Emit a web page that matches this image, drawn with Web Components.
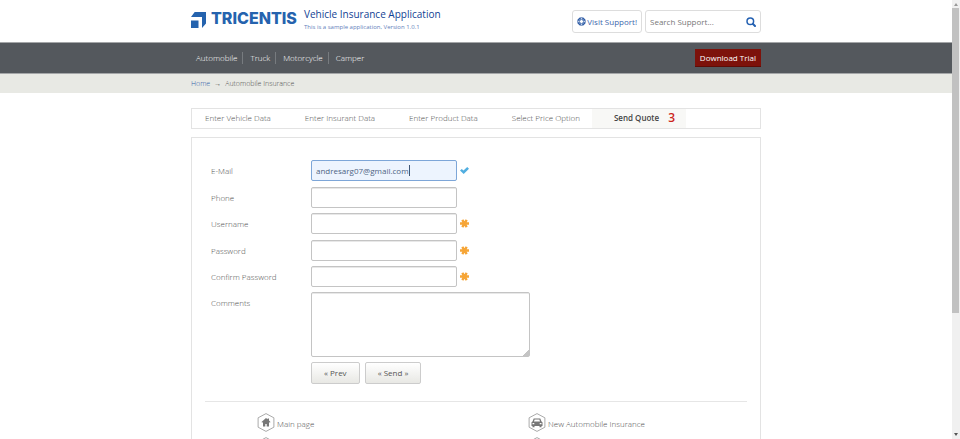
<!DOCTYPE html>
<html lang="en">
<head>
<meta charset="utf-8">
<title>Vehicle Insurance Application</title>
<style>
body { margin: 0; background: #fff; color: #505050; font: 300 8px/12px "Open Sans", "Noto Sans", sans-serif; }
</style>
</head>
<body>
<insurance-page></insurance-page>
<script>
const shared = `*{box-sizing:border-box}a{color:inherit;text-decoration:none}button,input,textarea{font:inherit;color:inherit}svg{display:block}`;
function define(name, css, html) {
  customElements.define(name, class extends HTMLElement {
    constructor() {
      super();
      const root = this.attachShadow({ mode: "open" });
      const content = typeof html === "function" ? html(this) : html;
      root.innerHTML = `<style>${shared}${css}</style>${content}`;
    }
  });
}

define("page-width", `
:host{display:block;width:100%;max-width:570px;margin:0 auto}`, `<slot></slot>`);

define("site-header", `
:host{display:block}
.row{display:flex;justify-content:space-between;align-items:flex-start;height:42px;padding-top:7px}
.brand{display:flex;color:#2563ae}
.mark{margin-top:5px;margin-right:5px}
.word{font:800 16px/22px Inter,"Open Sans",sans-serif;width:93px}
h1{margin:0;font-size:10px;line-height:15px;font-weight:500;color:#123f94;white-space:nowrap}
p{margin:0;font-size:6px;line-height:10px;font-weight:400;color:#5f80ba;white-space:nowrap}
.tools{display:flex;gap:3px;padding-top:3px;font-weight:400}
.support,.search{height:23px;border:1px solid #ddd;border-radius:3px;display:flex;align-items:center;background:#fff}
.support{color:#4068ad;padding:0 4px;gap:1px;white-space:nowrap}
.search{width:116px;padding:0 4px}
input{flex:1;min-width:0;border:0;padding:0;background:none;outline:0;height:20px}
input::placeholder{color:#777;opacity:1}
button{border:0;background:none;padding:0}`, `
<page-width><div class="row">
<div class="brand">
<svg class="mark" width="15" height="16" viewBox="0 0 15 16" aria-hidden="true"><path fill="#2563ae" d="M0 8.500h7.500V16H0zM3.700 0H15v11.500L11 16V5H0z"/></svg>
<span class="word">TRICENTIS</span>
<div><h1>Vehicle Insurance Application</h1><p>This is a sample application, Version 1.0.1</p></div>
</div>
<div class="tools">
<a class="support" href="#support"><svg width="9" height="9" viewBox="0 0 9 9" fill="none" stroke="#2d5ba5" aria-hidden="true"><circle cx="4.500" cy="4.500" r="3.700" stroke-width="1"/><circle cx="4.500" cy="4.500" r="2" stroke-width=".7"/><path d="M3 .5v2.500M6 .5v2.500M3 6v2.500M6 6v2.500M.5 3h2.500M.5 6h2.500M6 3h2.500M6 6h2.500"/></svg>Visit Support!</a>
<form class="search"><input type="search" aria-label="Search Support" placeholder="Search Support..."><button type="button" aria-label="Search"><svg width="10" height="10" viewBox="0 0 10 10" fill="none" stroke="#2461b2" aria-hidden="true"><circle cx="4.300" cy="4.300" r="3.300" stroke-width="1.500"/><path stroke-width="2" stroke-linecap="round" d="M7 7l2 2"/></svg></button></form>
</div></div></page-width>`);

define("main-nav", `
:host{display:block;background:#54585d;border:1px solid #a4a6a8;border-width:1px 0;color:#fff}
.row{display:flex;align-items:center;justify-content:space-between;height:30px}
nav{display:flex;padding-bottom:1px}
nav a{padding:0 5px 0 7px;border-right:1px solid #777b7f}
nav a:first-child{padding-left:5px}
nav a:last-child{border:0}
.trial{background:#7d120b;border-bottom:1px solid #5e0c07;padding:0 5px;height:18px;line-height:17px;font-weight:400;color:#fff}`, `
<page-width><div class="row"><nav><a href="#automobile">Automobile</a><a href="#truck">Truck</a><a href="#motorcycle">Motorcycle</a><a href="#camper">Camper</a></nav>
<a class="trial" href="#trial">Download Trial</a></div></page-width>`);

define("bread-crumbs", `
:host{display:block;background:#e8e9e4;font-size:7px;line-height:19px}
nav{display:flex;gap:4px}
a{color:#3460a8}`, `
<page-width><nav aria-label="Breadcrumb"><a href="#home">Home</a><span>→</span><span>Automobile Insurance</span></nav></page-width>`);

define("step-tabs", `
:host{display:flex;border:1px solid #e3e3e3;height:21px;line-height:18px;margin:15px 0 8px}
::slotted(step-tab:first-child){margin-left:-9px}`, `<slot></slot>`);

define("step-tab", `
:host{display:block;white-space:nowrap}
a{display:flex;padding:0 12px 0 22px;height:100%}
:host([count]) a{background:#f8f8f6;font-weight:600;color:#444;padding-right:11px}
b{font-size:12px;color:#cc241a;font-weight:600;margin-left:9px}`, host => `<a href="#${host.getAttribute("step")}"><slot></slot>${host.hasAttribute("count") ? `<b>${host.getAttribute("count")}</b>` : ""}</a>`);

const icons = {
  ok: `<svg width="9" height="9" viewBox="0 0 9 9" role="img" aria-label="Valid"><path fill="#51aee0" d="M0 4.600L1.800 2.900 3.500 4.400 7.200 1 9 2.800 3.700 8z"/></svg>`,
  required: `<svg width="9" height="9" viewBox="0 0 9 9" role="img" aria-label="Required" stroke="#f6a536" stroke-width="2.400"><path d="M0 4.500h9M2.300 .8l4.400 7.400M6.700 .8L2.300 8.200"/></svg>`
};
define("form-field", `
:host{display:flex;align-items:flex-start}
label{width:100px;line-height:21px;flex:none}
input,textarea{border:1px solid #c4c4c4;border-radius:2px;background-color:#fff;box-shadow:inset 0 1px 0 #e8e8e8;display:block;padding:0 4px;outline:0;font-weight:400;margin:0}
input{width:146px;height:21px}
textarea{width:219px;height:65px;resize:both}
textarea::-webkit-resizer{background:linear-gradient(135deg,transparent 80%,#c4c4c4 80%)}
:host([active]) input{border-color:#7da6d8;box-shadow:none;color:#4d6484;background:linear-gradient(#405878,#405878) 97px 4px/1px 11px no-repeat #edf4fe}
svg{margin:6px 0 0 3px}`, host => {
  const type = host.getAttribute("type");
  const control = type === "area"
    ? `<textarea id="control"></textarea>`
    : `<input id="control" type="${type}" value="${host.getAttribute("value") || ""}">`;
  return `<label for="control"><slot></slot></label>${control}${icons[host.getAttribute("state")] || ""}`;
});

define("form-button", `
:host{display:block}
button{display:block;height:22px;padding:0 12px;border:1px solid #ccc;border-radius:2px;background:linear-gradient(#fff,#e8e8e4);font-weight:400;color:#555}`, `<button type="button"><slot></slot></button>`);

const glyphs = {
  home: `<path fill="#777" d="M9 5L4.500 9l.7.7L6 9v4.500h2.300V11h1.400v2.500H12V9l.8.700.7-.7-1.500-1.400V5.500h-1.400v.8z"/>`,
  car: `<path fill="#777" fill-rule="evenodd" d="M5.700 5.500h6.600l1.200 3 1 .8v3.700h-1v1.200h-2V13h-5v1.200h-2V13h-1V9.300l1-.8zM6.600 6.500L6 8.600h6l-.6-2.100zM4.500 10v1.300h1.800V10zm7.200 0v1.300h1.800V10z"/>`,
  none: ``
};
define("hex-link", `
:host{display:block}
a{display:flex;gap:2px;height:19px;align-items:center;white-space:nowrap}
svg{flex:none}
span{padding-top:2px}`, host => `<a href="#${host.getAttribute("to")}"><svg width="18" height="19" viewBox="0 0 18 19" aria-hidden="true"><path fill="none" stroke="#aaa" d="M9 .6l7.900 4.200v9.400L9 18.400l-7.900-4.200V4.800z"/>${glyphs[host.getAttribute("icon")]}</svg><span><slot></slot></span></a>`);

define("quote-panel", `
:host{display:block;border:1px solid #e3e3e3;padding:22px 13px}
.form{padding:0 6px}
.inputs{display:grid;align-content:space-between;height:127px;margin-bottom:5px}
.actions{display:flex;gap:5px;padding:5px 0 0 100px;margin-bottom:17px}
.links{display:grid;grid-template-columns:1fr 1fr;row-gap:5px;border-top:1px solid #e6e6e6;padding-top:11px}
hex-link{padding-left:52px}`, `
<div class="form"><div class="inputs">
<form-field type="email" active state="ok" value="andresarg07@gmail.com">E-Mail</form-field>
<form-field type="tel">Phone</form-field>
<form-field type="text" state="required">Username</form-field>
<form-field type="password" state="required">Password</form-field>
<form-field type="password" state="required">Confirm Password</form-field></div>
<form-field type="area">Comments</form-field>
<div class="actions"><form-button>« Prev</form-button><form-button>« Send »</form-button></div></div>
<div class="links"><hex-link icon="home" to="main">Main page</hex-link><hex-link icon="car" to="automobile">New Automobile Insurance</hex-link><hex-link icon="none" to="more"></hex-link><hex-link icon="none" to="other"></hex-link></div>`);

define("scroll-rail", `
:host{display:flex;flex-direction:column;width:8px;background:#f0f0f0}
svg{flex:none}
.track{flex:1}
.thumb{height:72%;background:#c1c1c1;margin:0 1px 0 0}`, `
<svg width="8" height="8" viewBox="0 0 8 8" aria-hidden="true"><path fill="#999" d="M2 6l2-3 2 3z"/></svg>
<div class="track"><div class="thumb"></div></div>
<svg width="8" height="8" viewBox="0 0 8 8" aria-hidden="true"><path fill="#555" d="M2 2l2 3 2-3z"/></svg>`);

define("insurance-page", `
:host{display:flex;height:100vh;overflow:hidden}
main{flex:1;min-width:0;overflow:hidden}`, `
<main><site-header></site-header><main-nav></main-nav><bread-crumbs></bread-crumbs>
<page-width><step-tabs>
<step-tab step="vehicle">Enter Vehicle Data</step-tab><step-tab step="insurant">Enter Insurant Data</step-tab><step-tab step="product">Enter Product Data</step-tab><step-tab step="price">Select Price Option</step-tab><step-tab step="send" count="3">Send Quote</step-tab>
</step-tabs><quote-panel></quote-panel></page-width></main><scroll-rail></scroll-rail>`);
</script>
</body>
</html>
